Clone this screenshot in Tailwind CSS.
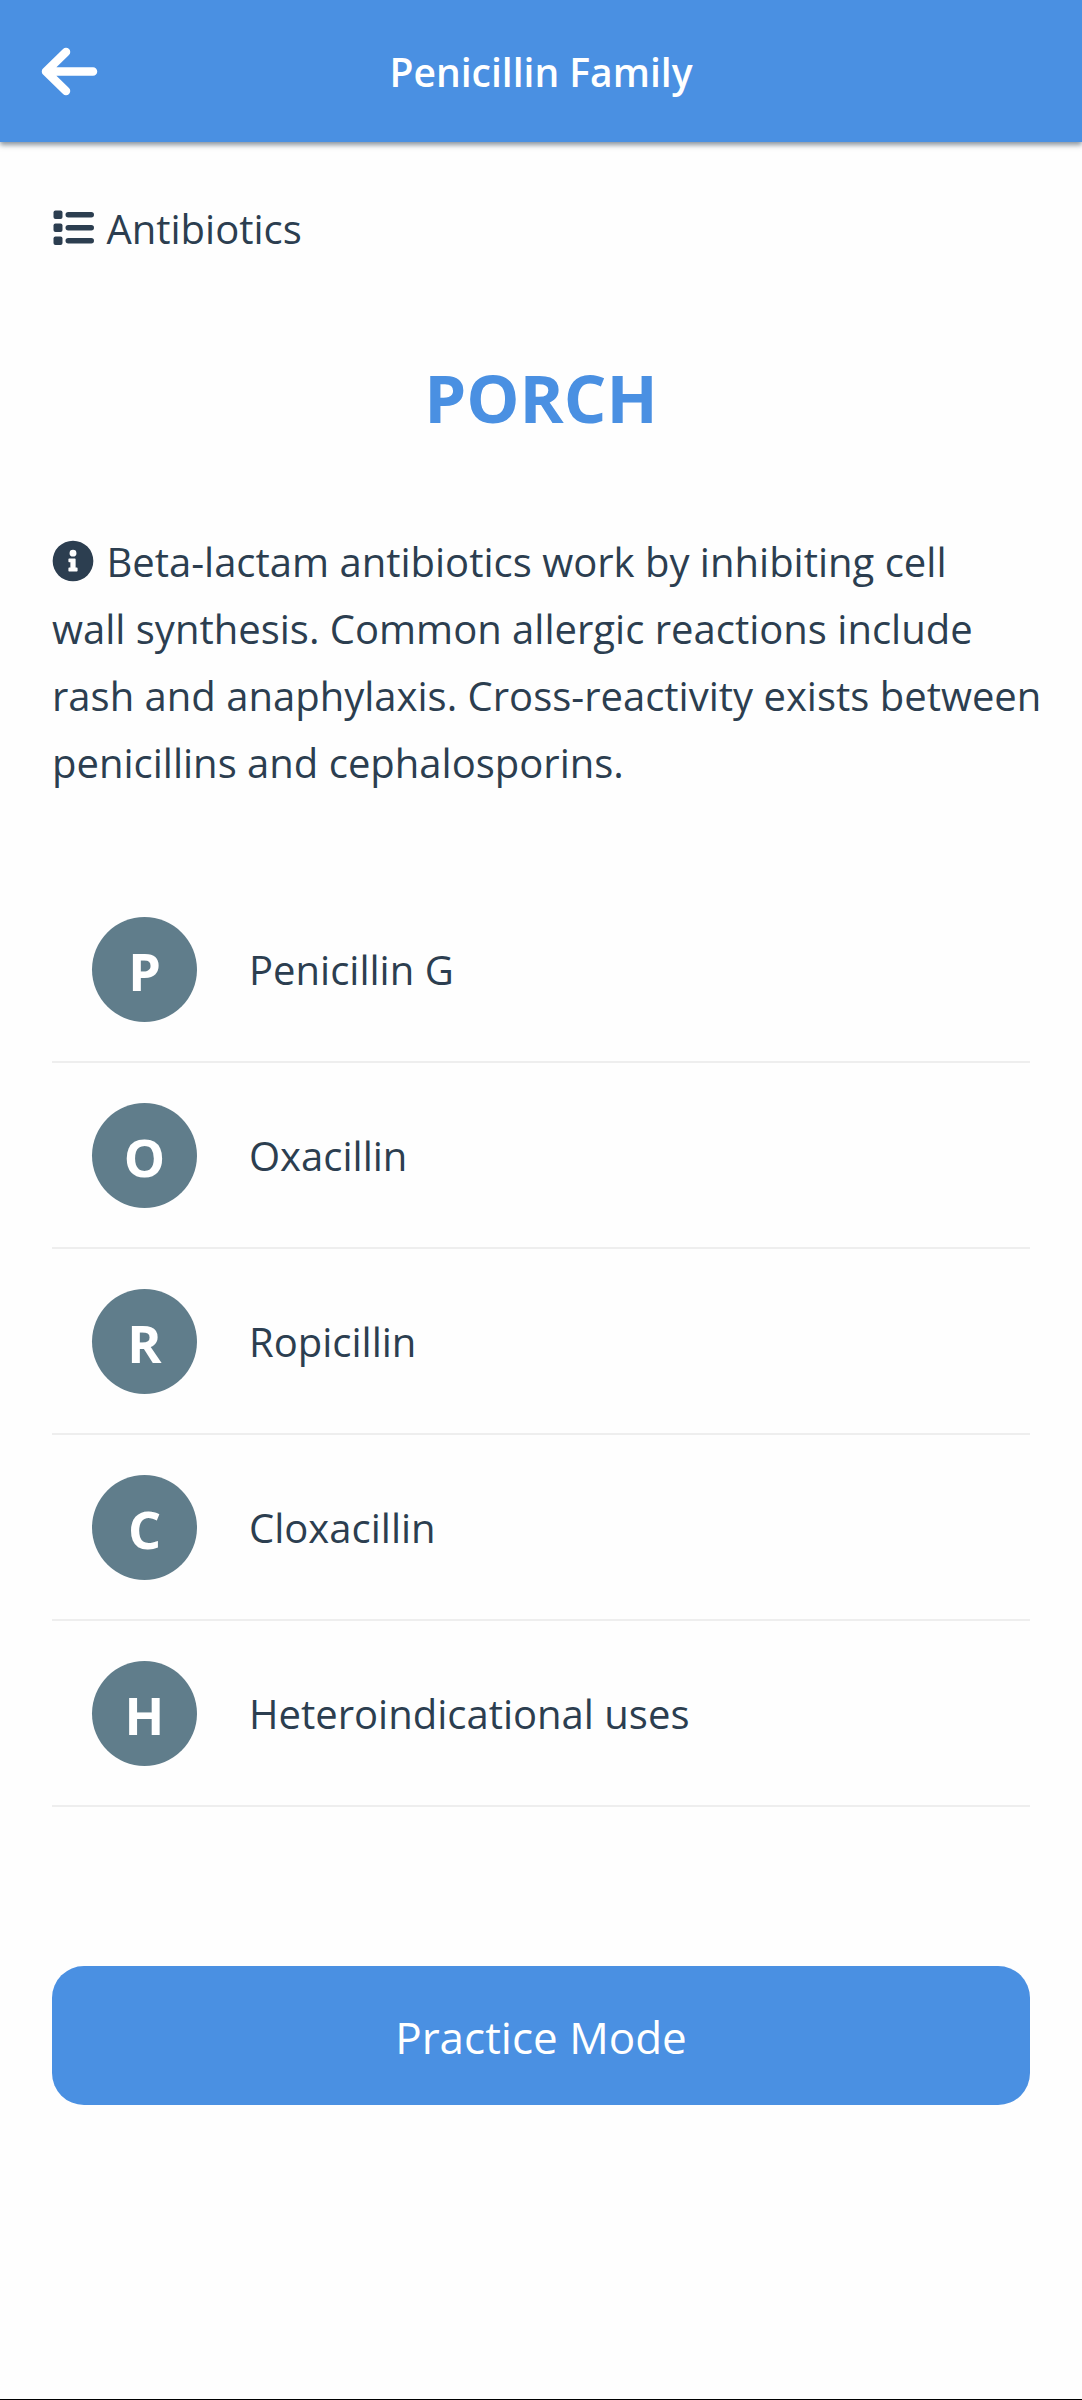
<!DOCTYPE html>
<html lang="en">
<head>
<meta charset="utf-8">
<meta name="viewport" content="width=device-width, initial-scale=1">
<title>Penicillin Family</title>
<script src="https://cdn.jsdelivr.net/npm/@tailwindcss/browser@4"></script>
</head>
<body class="flex min-h-screen flex-col border-b border-black bg-[#fefefe] font-['Segoe_UI','Open_Sans',sans-serif] text-[40px] leading-[67px] text-[#2c3e50]">
  <header class="grid h-[142px] grid-cols-[1fr_auto_1fr] items-center bg-[#4a90e2] px-[39px] text-white shadow-[0_3px_5px_rgba(44,62,80,0.55)]">
    <button type="button" aria-label="Back" class="justify-self-start">
      <svg class="h-[52px] w-[60px]" viewBox="0 0 60 52" fill="none" stroke="currentColor" stroke-width="8.5" stroke-linecap="round" stroke-linejoin="round" aria-hidden="true"><path d="M27 7 7 26.500 27 46M7 26.500H54"/></svg>
    </button>
    <h1 class="text-[39px] font-semibold">Penicillin Family</h1>
  </header>

  <main class="flex flex-col px-[52px] pt-[53px]">
    <p>
      <svg class="mr-[2px] inline-block h-[42px] w-[42px] align-[-5px]" viewBox="0 0 42 42" fill="currentColor" aria-hidden="true"><rect x="1.500" y="3.500" width="9" height="8.500" rx="2"/><rect x="1.500" y="16.500" width="9" height="8.500" rx="2"/><rect x="1.500" y="29.500" width="9" height="8.500" rx="2"/><rect x="13.500" y="5" width="28.500" height="5.500" rx="2.750"/><rect x="13.500" y="18" width="28.500" height="5.500" rx="2.750"/><rect x="13.500" y="31" width="28.500" height="5.500" rx="2.750"/></svg>
      Antibiotics
    </p>
    <h2 class="mt-[82px] text-center text-[67px] font-bold leading-[106px] text-[#4a90e2]">PORCH</h2>
    <p class="-mr-4 mt-[78px]">
      <svg class="mr-[2px] inline-block h-[42px] w-[42px] align-[-5px]" viewBox="0 0 512 512" fill="currentColor" aria-hidden="true"><path d="M256 8a248 248 0 1 0 0 496 248 248 0 0 0 0-496zm0 110a42 42 0 1 1 0 84 42 42 0 0 1 0-84zm56 254c0 7-5 12-12 12h-88c-7 0-12-5-12-12v-24c0-7 5-12 12-12h12v-64h-12c-7 0-12-5-12-12v-24c0-7 5-12 12-12h64c7 0 12 5 12 12v100h12c7 0 12 5 12 12z"/></svg>
      Beta-lactam antibiotics work by inhibiting cell<br>
      wall synthesis. Common allergic reactions include<br>
      rash and anaphylaxis. Cross-reactivity exists between penicillins and cephalosporins.
    </p>

    <ul class="mt-[81px]">
      <li class="flex items-center gap-[52px] border-b-2 border-[#eeeeee] px-[40px] pt-[40px] pb-[39px]"><span class="flex size-[105px] shrink-0 items-center justify-center rounded-full bg-[#607d8b] pt-0.5 text-[52px] font-bold text-white">P</span><span>Penicillin G</span></li>
      <li class="flex items-center gap-[52px] border-b-2 border-[#eeeeee] px-[40px] pt-[40px] pb-[39px]"><span class="flex size-[105px] shrink-0 items-center justify-center rounded-full bg-[#607d8b] pt-0.5 text-[52px] font-bold text-white">O</span><span>Oxacillin</span></li>
      <li class="flex items-center gap-[52px] border-b-2 border-[#eeeeee] px-[40px] pt-[40px] pb-[39px]"><span class="flex size-[105px] shrink-0 items-center justify-center rounded-full bg-[#607d8b] pt-0.5 text-[52px] font-bold text-white">R</span><span>Ropicillin</span></li>
      <li class="flex items-center gap-[52px] border-b-2 border-[#eeeeee] px-[40px] pt-[40px] pb-[39px]"><span class="flex size-[105px] shrink-0 items-center justify-center rounded-full bg-[#607d8b] pt-0.5 text-[52px] font-bold text-white">C</span><span>Cloxacillin</span></li>
      <li class="flex items-center gap-[52px] border-b-2 border-[#eeeeee] px-[40px] pt-[40px] pb-[39px]"><span class="flex size-[105px] shrink-0 items-center justify-center rounded-full bg-[#607d8b] pt-0.5 text-[52px] font-bold text-white">H</span><span>Heteroindicational uses</span></li>
    </ul>

    <button type="button" class="mt-[159px] h-[139px] w-full rounded-[32px] bg-[#4a90e2] pt-1 text-[44px] text-white">Practice Mode</button>
  </main>
</body>
</html>
